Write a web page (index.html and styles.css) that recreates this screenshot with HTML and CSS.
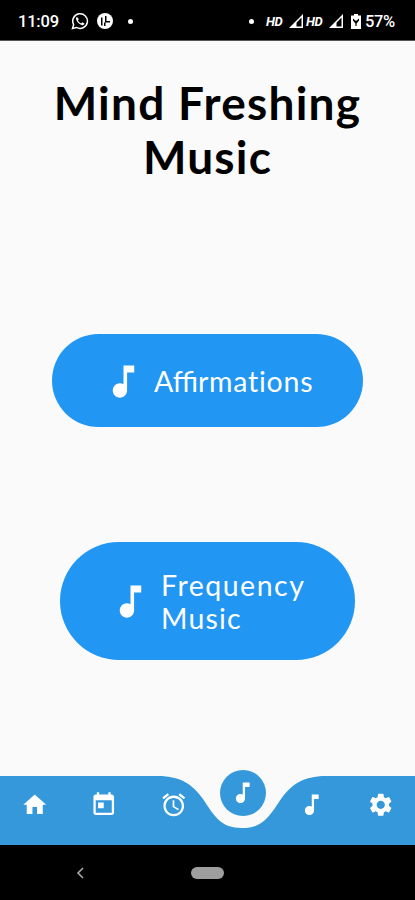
FILE: index.html
```
<!DOCTYPE html>
<html lang="en">
<head>
<meta charset="utf-8">
<title>Mind Freshing Music</title>
<link rel="stylesheet" href="styles.css">
</head>
<body>
<svg class="defs" aria-hidden="true">
  <symbol id="note" viewBox="0 0 24 24"><path d="M12 3v10.550c-.59-.34-1.270-.55-2-.55-2.210 0-4 1.790-4 4s1.790 4 4 4 4-1.790 4-4V7h4V3z"/></symbol>
  <symbol id="signal" viewBox="0 0 14 14"><path d="M0 14 14 0V14zM7.500 8.800v3.700h5V3.600z" fill-rule="evenodd"/></symbol>
</svg>
<header class="status">
  <span class="time">11:09</span>
  <svg class="whatsapp" viewBox="0 0 24 24"><path d="M2 22l1.500-5.200A9.800 9.800 0 1 1 7.200 20.600z" fill="none" stroke="#fff" stroke-width="2"/><path d="M8 6.500c-1 .5-1.600 1.700-1.200 3.200 1 3.800 4.300 7 8 7.800 1.500.3 2.900-.7 3.100-2.200l-3-1.600-1.400 1.500c-2-.8-3.500-2.300-4.300-4.200l1.300-1.500z"/></svg>
  <svg class="badge" viewBox="0 0 16 16"><circle cx="8" cy="8" r="8"/><path d="M4 4.500v8h1.500V4.500zM8 3h1.500v5H13v1.500H8zM7 9.500h1.500V13H7z" fill="#000"/></svg>
  <i class="dot"></i>
  <span class="spacer"></span>
  <i class="dot dot-end"></i>
  <span class="hd">HD</span>
  <svg class="signal"><use href="#signal"/></svg>
  <span class="hd hd-second">HD</span>
  <svg class="signal signal-second"><use href="#signal"/></svg>
  <svg class="battery" viewBox="0 0 10 15"><path d="M3 0h4v1.500h3V15H0V1.500h3z"/><path d="M2 4.500 5 7l3-2.500v2L5.600 9.500V12H4.400V9.500L2 6.500z" fill="#000"/></svg>
  <span class="percent">57%</span>
</header>
<main>
  <h1><span class="title-first">Mind Freshing</span><br><span class="title-second">Music</span></h1>
  <button class="pill affirmations"><svg class="note"><use href="#note"/></svg><span>Affi<span class="wide">rmations</span></span></button>
  <button class="pill frequency"><svg class="note"><use href="#note"/></svg><span><span class="word">Frequency</span><br><span class="wide-last">Music</span></span></button>
</main>
<nav class="tabs">
  <svg class="wave" viewBox="0 0 415 70"><path d="M0 0H158C181 0 193 9 203 23C215 41 221 52 242 52C263 52 269 41 281 23C291 9 303 0 326 0H415V70H0z"/></svg>
  <a class="tab"><svg viewBox="0 0 24 24"><path d="M10 20v-6h4v6h5v-8h3L12 3 2 12h3v8z"/></svg></a>
  <a class="tab"><svg viewBox="0 0 24 24"><path d="M19 3h-1V1h-2v2H8V1H6v2H5c-1.110 0-2 .9-2 2v14c0 1.100.89 2 2 2h14c1.100 0 2-.9 2-2V5c0-1.100-.9-2-2-2zm0 16H5V8h14v11zM7 10h5v5H7z"/></svg></a>
  <a class="tab"><svg viewBox="0 0 24 24"><path d="M22 5.720l-4.600-3.860-1.290 1.530 4.600 3.860L22 5.720zM7.880 3.390L6.600 1.860 2 5.710l1.290 1.530 4.590-3.850zM12.500 8H11v6l4.750 2.850.75-1.230-4-2.370V8zM12 4c-4.970 0-9 4.030-9 9s4.020 9 9 9c4.970 0 9-4.030 9-9s-4.030-9-9-9zm0 16c-3.870 0-7-3.130-7-7s3.130-7 7-7 7 3.130 7 7-3.130 7-7 7z"/></svg></a>
  <a class="tab"><span class="active"><svg><use href="#note"/></svg></span></a>
  <a class="tab"><svg><use href="#note"/></svg></a>
  <a class="tab"><svg viewBox="0 0 24 24"><path d="M19.140 12.940c.04-.3.060-.61.060-.94 0-.32-.02-.64-.07-.94l2.030-1.580c.18-.14.230-.41.120-.61l-1.920-3.320c-.12-.22-.37-.29-.59-.22l-2.390.96c-.5-.38-1.030-.7-1.620-.94l-.36-2.540c-.04-.24-.24-.41-.48-.41h-3.840c-.24 0-.43.170-.47.410l-.36 2.540c-.59.240-1.130.570-1.620.940l-2.390-.96c-.22-.08-.47 0-.59.220L2.740 8.870c-.12.210-.08.470.120.610l2.030 1.580c-.05.300-.09.630-.09.940s.02.640.070.940l-2.030 1.580c-.18.140-.23.410-.12.610l1.920 3.320c.12.220.37.290.59.220l2.390-.96c.5.380 1.030.7 1.620.940l.36 2.540c.05.240.24.410.48.410h3.840c.24 0 .44-.17.470-.41l.36-2.540c.59-.24 1.130-.56 1.620-.94l2.390.96c.22.080.47 0 .59-.22l1.920-3.320c.12-.22.070-.47-.12-.61l-2.010-1.580zM12 15.600c-1.980 0-3.600-1.620-3.600-3.600s1.620-3.600 3.600-3.600 3.600 1.620 3.600 3.600-1.620 3.600-3.600 3.600z"/></svg></a>
</nav>
<footer class="system">
  <svg class="back" viewBox="0 0 8 12"><path d="M7 1 2 6l5 5"/></svg>
  <i class="home-pill"></i>
</footer>
</body>
</html>
```

FILE: styles.css
```
* { box-sizing: border-box; }
body {
  margin: 0;
  width: 415px;
  height: 900px;
  overflow: hidden;
  display: flex;
  flex-direction: column;
  background: #fafafa;
  font-family: Lato, sans-serif;
}
svg { display: block; fill: currentColor; flex: none; }
.defs { position: absolute; width: 0; height: 0; }

.status {
  height: 41px;
  padding: 2px 19px 0 18px;
  display: flex;
  align-items: center;
  background: #000;
  border-bottom: 1px solid #555;
  color: #fff;
  font: 500 16.500px Roboto, sans-serif;
}
.time { width: 41px; letter-spacing: -.2px; }
.whatsapp { width: 18px; height: 18px; margin-left: 12px; }
.badge { width: 16px; height: 16px; margin-left: 8px; }
.dot { width: 5px; height: 5px; margin-left: 15px; border-radius: 50%; background: #fff; }
.dot-end { margin: 0 12px 0 0; }
.spacer { flex: 1; }
.hd { width: 18px; font: italic 700 13px Roboto, sans-serif; letter-spacing: -.3px; }
.signal { width: 14px; height: 14px; margin-left: 5px; }
.hd-second { margin-left: 3px; }
.battery { width: 10px; height: 15px; margin: 0 4px 0 8px; }
.percent { width: 31px; letter-spacing: -.4px; }

main {
  height: 735px;
  display: flex;
  flex-direction: column;
  align-items: center;
}
h1 {
  margin: 35px 0 0;
  height: 108px;
  text-align: center;
  font-size: 46px;
  line-height: 54px;
  font-weight: 700;
  color: #000;
  white-space: nowrap;
}
.title-first { letter-spacing: 1.250px; }
.title-second { letter-spacing: 1.200px; }
.pill {
  border: 0;
  display: flex;
  align-items: center;
  background: #2196f3;
  color: #fff;
  font: 400 28.500px/33px Lato, sans-serif;
  text-align: left;
  white-space: nowrap;
}
.note { width: 43px; height: 43px; }
.affirmations {
  width: 311px;
  height: 93px;
  margin-top: 150px;
  padding: 2px 0 0 50px;
  border-radius: 47px;
}
.wide { letter-spacing: .75px; }
.frequency {
  width: 295px;
  height: 118px;
  margin-top: 115px;
  padding: 1px 0 0 49px;
  border-radius: 59px;
}
.word { letter-spacing: 1.500px; }
.wide-last { letter-spacing: 1.200px; }
.pill > span { margin-left: 9px; }

.tabs {
  position: relative;
  height: 69px;
  display: grid;
  grid-template-columns: repeat(6, 1fr);
  color: #fff;
}
.wave { position: absolute; top: 0; left: 0; width: 415px; height: 70px; color: #3498db; }
.tab {
  position: relative;
  display: flex;
  justify-content: center;
  padding: 15px 0 0 1px;
}
.tab svg { width: 27.500px; height: 27.500px; }
.active {
  width: 46px;
  height: 46px;
  margin-top: -21px;
  display: flex;
  align-items: center;
  justify-content: center;
  border-radius: 50%;
  background: #3498db;
}

.system {
  position: relative;
  height: 55px;
  padding: 0 191px 0 76px;
  display: flex;
  align-items: center;
  justify-content: space-between;
  background: #000;
}
.back { width: 8px; height: 12px; fill: none; stroke: #aaa; stroke-width: 1.600; }
.home-pill { width: 33px; height: 12px; border-radius: 6px; background: #9e9e9e; }
```
